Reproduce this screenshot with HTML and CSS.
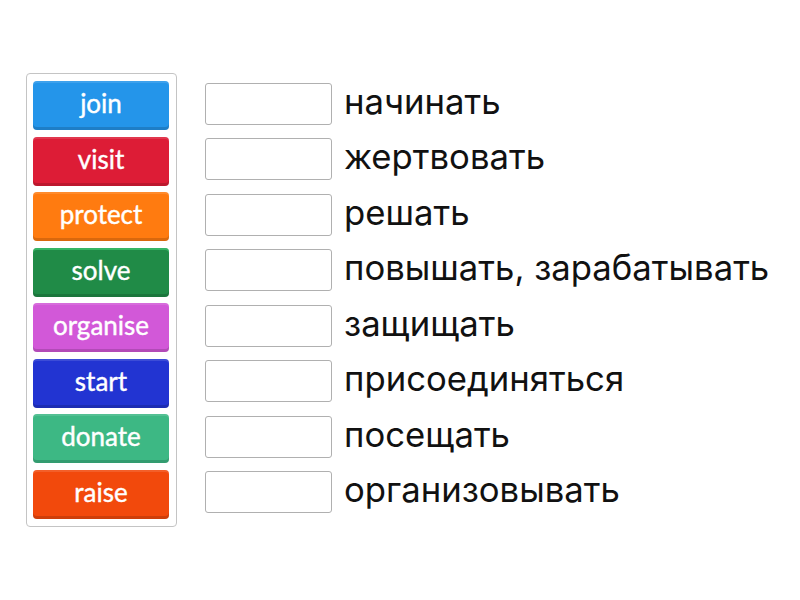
FILE: index.html
```html
<!DOCTYPE html>
<html>
<head>
<meta charset="utf-8">
<link rel="stylesheet" href="styles.css">
</head>
<body>
<div class="game">
  <div class="bank">
    <div class="tile c-blue">join</div>
    <div class="tile c-red">visit</div>
    <div class="tile c-orange">protect</div>
    <div class="tile c-green">solve</div>
    <div class="tile c-purple">organise</div>
    <div class="tile c-navy">start</div>
    <div class="tile c-teal">donate</div>
    <div class="tile c-flame">raise</div>
  </div>
  <div class="targets">
    <div class="row"><div class="slot"></div><span class="word">начинать</span></div>
    <div class="row"><div class="slot"></div><span class="word">жертвовать</span></div>
    <div class="row"><div class="slot"></div><span class="word">решать</span></div>
    <div class="row"><div class="slot"></div><span class="word">повышать, зарабатывать</span></div>
    <div class="row"><div class="slot"></div><span class="word">защищать</span></div>
    <div class="row"><div class="slot"></div><span class="word">присоединяться</span></div>
    <div class="row"><div class="slot"></div><span class="word">посещать</span></div>
    <div class="row"><div class="slot"></div><span class="word">организовывать</span></div>
  </div>
</div>
</body>
</html>
```
FILE: styles.css
```css
html, body {
  margin: 0;
  padding: 0;
  background: #fff;
}
.game {
  display: flex;
  align-items: flex-start;
  padding: 73px 0 0 26px;
}
.bank {
  display: flex;
  flex-direction: column;
  gap: 6.5px;
  padding: 7px 7px 7px 6px;
  border: 1px solid #c4c4c4;
  border-radius: 4px;
}
.tile {
  width: 136px;
  height: 49px;
  box-sizing: border-box;
  border-radius: 4px;
  display: flex;
  align-items: center;
  justify-content: center;
  color: #fff;
  font-family: Lato, "Liberation Sans", sans-serif;
  font-size: 26px;
  -webkit-text-stroke: 0.4px #fff;
  padding-bottom: 5px;
  box-shadow: inset 0 -3px 0 rgba(0,0,0,0.15), inset 0 2px 0 rgba(255,255,255,0.12);
}
.c-blue { background: #2495ea; }
.c-red { background: #dd1c36; }
.c-orange { background: #ff7b10; }
.c-green { background: #208b47; box-shadow: inset 0 -3px 0 rgba(0,0,0,0.15), inset 0 2px 0 rgba(70,210,120,0.6); }
.c-purple { background: #d258d8; }
.c-navy { background: #2234d2; }
.c-teal { background: #3db884; }
.c-flame { background: #f2490c; }
.targets {
  display: flex;
  flex-direction: column;
  gap: 6.5px;
  margin-left: 28px;
  padding-top: 8px;
}
.row {
  height: 49px;
  display: flex;
  align-items: center;
}
.slot {
  width: 127px;
  height: 42px;
  box-sizing: border-box;
  border: 1px solid #b0b0b0;
  border-radius: 3px;
  margin-top: -4px;
}
.word {
  margin-left: 12px;
  margin-top: -10px;
  font-family: Inter, "Liberation Sans", sans-serif;
  font-size: 34.7px;
  line-height: 40px;
  color: #111;
}
```
